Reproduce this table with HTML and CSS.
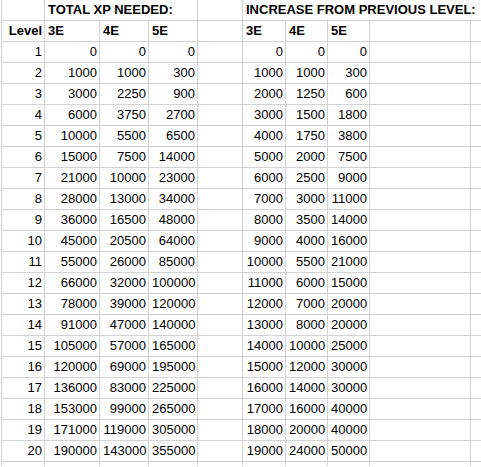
FILE: index.html
```html
<!DOCTYPE html>
<html>
<head>
<meta charset="utf-8">
<link rel="stylesheet" href="styles.css">
</head>
<body>
<div class="sheet">
  <div class="c"></div>
  <div class="c b span3">TOTAL XP NEEDED:</div>
  <div class="c"></div>
  <div class="c b span4 over">INCREASE FROM PREVIOUS LEVEL:</div>
  <div class="c j"></div>

  <div class="c b n">Level</div>
  <div class="c b">3E</div><div class="c b">4E</div><div class="c b">5E</div>
  <div class="c"></div>
  <div class="c b">3E</div><div class="c b">4E</div><div class="c b">5E</div>
  <div class="c"></div><div class="c j"></div>

  <div class="c n">1</div><div class="c n">0</div><div class="c n">0</div><div class="c n">0</div><div class="c"></div><div class="c n">0</div><div class="c n">0</div><div class="c n">0</div><div class="c"></div><div class="c j"></div>
  <div class="c n">2</div><div class="c n">1000</div><div class="c n">1000</div><div class="c n">300</div><div class="c"></div><div class="c n">1000</div><div class="c n">1000</div><div class="c n">300</div><div class="c"></div><div class="c j"></div>
  <div class="c n">3</div><div class="c n">3000</div><div class="c n">2250</div><div class="c n">900</div><div class="c"></div><div class="c n">2000</div><div class="c n">1250</div><div class="c n">600</div><div class="c"></div><div class="c j"></div>
  <div class="c n">4</div><div class="c n">6000</div><div class="c n">3750</div><div class="c n">2700</div><div class="c"></div><div class="c n">3000</div><div class="c n">1500</div><div class="c n">1800</div><div class="c"></div><div class="c j"></div>
  <div class="c n">5</div><div class="c n">10000</div><div class="c n">5500</div><div class="c n">6500</div><div class="c"></div><div class="c n">4000</div><div class="c n">1750</div><div class="c n">3800</div><div class="c"></div><div class="c j"></div>
  <div class="c n">6</div><div class="c n">15000</div><div class="c n">7500</div><div class="c n">14000</div><div class="c"></div><div class="c n">5000</div><div class="c n">2000</div><div class="c n">7500</div><div class="c"></div><div class="c j"></div>
  <div class="c n">7</div><div class="c n">21000</div><div class="c n">10000</div><div class="c n">23000</div><div class="c"></div><div class="c n">6000</div><div class="c n">2500</div><div class="c n">9000</div><div class="c"></div><div class="c j"></div>
  <div class="c n">8</div><div class="c n">28000</div><div class="c n">13000</div><div class="c n">34000</div><div class="c"></div><div class="c n">7000</div><div class="c n">3000</div><div class="c n">11000</div><div class="c"></div><div class="c j"></div>
  <div class="c n">9</div><div class="c n">36000</div><div class="c n">16500</div><div class="c n">48000</div><div class="c"></div><div class="c n">8000</div><div class="c n">3500</div><div class="c n">14000</div><div class="c"></div><div class="c j"></div>
  <div class="c n">10</div><div class="c n">45000</div><div class="c n">20500</div><div class="c n">64000</div><div class="c"></div><div class="c n">9000</div><div class="c n">4000</div><div class="c n">16000</div><div class="c"></div><div class="c j"></div>
  <div class="c n">11</div><div class="c n">55000</div><div class="c n">26000</div><div class="c n">85000</div><div class="c"></div><div class="c n">10000</div><div class="c n">5500</div><div class="c n">21000</div><div class="c"></div><div class="c j"></div>
  <div class="c n">12</div><div class="c n">66000</div><div class="c n">32000</div><div class="c n">100000</div><div class="c"></div><div class="c n">11000</div><div class="c n">6000</div><div class="c n">15000</div><div class="c"></div><div class="c j"></div>
  <div class="c n">13</div><div class="c n">78000</div><div class="c n">39000</div><div class="c n">120000</div><div class="c"></div><div class="c n">12000</div><div class="c n">7000</div><div class="c n">20000</div><div class="c"></div><div class="c j"></div>
  <div class="c n">14</div><div class="c n">91000</div><div class="c n">47000</div><div class="c n">140000</div><div class="c"></div><div class="c n">13000</div><div class="c n">8000</div><div class="c n">20000</div><div class="c"></div><div class="c j"></div>
  <div class="c n">15</div><div class="c n">105000</div><div class="c n">57000</div><div class="c n">165000</div><div class="c"></div><div class="c n">14000</div><div class="c n">10000</div><div class="c n">25000</div><div class="c"></div><div class="c j"></div>
  <div class="c n">16</div><div class="c n">120000</div><div class="c n">69000</div><div class="c n">195000</div><div class="c"></div><div class="c n">15000</div><div class="c n">12000</div><div class="c n">30000</div><div class="c"></div><div class="c j"></div>
  <div class="c n">17</div><div class="c n">136000</div><div class="c n">83000</div><div class="c n">225000</div><div class="c"></div><div class="c n">16000</div><div class="c n">14000</div><div class="c n">30000</div><div class="c"></div><div class="c j"></div>
  <div class="c n">18</div><div class="c n">153000</div><div class="c n">99000</div><div class="c n">265000</div><div class="c"></div><div class="c n">17000</div><div class="c n">16000</div><div class="c n">40000</div><div class="c"></div><div class="c j"></div>
  <div class="c n">19</div><div class="c n">171000</div><div class="c n">119000</div><div class="c n">305000</div><div class="c"></div><div class="c n">18000</div><div class="c n">20000</div><div class="c n">40000</div><div class="c"></div><div class="c j"></div>
  <div class="c n">20</div><div class="c n">190000</div><div class="c n">143000</div><div class="c n">355000</div><div class="c"></div><div class="c n">19000</div><div class="c n">24000</div><div class="c n">50000</div><div class="c"></div><div class="c j"></div>

  <div class="c"></div><div class="c"></div><div class="c"></div><div class="c"></div><div class="c"></div><div class="c"></div><div class="c"></div><div class="c"></div><div class="c"></div><div class="c j"></div>
</div>
</body>
</html>
```
FILE: styles.css
```css
html, body {
  margin: 0;
  padding: 0;
  background: #ffffff;
  overflow: hidden;
}

.sheet {
  display: grid;
  grid-template-columns: 43px 55px 49px 49px 45px 43px 42px 42px 101px 11px;
  grid-auto-rows: 21px;
  margin-left: 1px;
  border-left: 1px solid #d3d3d3;
  width: max-content;
  height: 466px;
  overflow: hidden;
  font-family: "Liberation Sans", Arial, sans-serif;
  font-size: 13px;
  color: #000000;
}

.c {
  box-sizing: border-box;
  border-right: 1px solid #d3d3d3;
  border-bottom: 1px solid #d3d3d3;
  line-height: 20px;
  padding: 0 2px 0 3px;
  white-space: nowrap;
  overflow: hidden;
}

.j {
  border-right: none;
}

.n {
  text-align: right;
}

.b {
  font-weight: bold;
}

.span3 {
  grid-column: span 3;
}

.span4 {
  grid-column: span 4;
}

.over {
  overflow: visible;
  border-right: none;
}
```
